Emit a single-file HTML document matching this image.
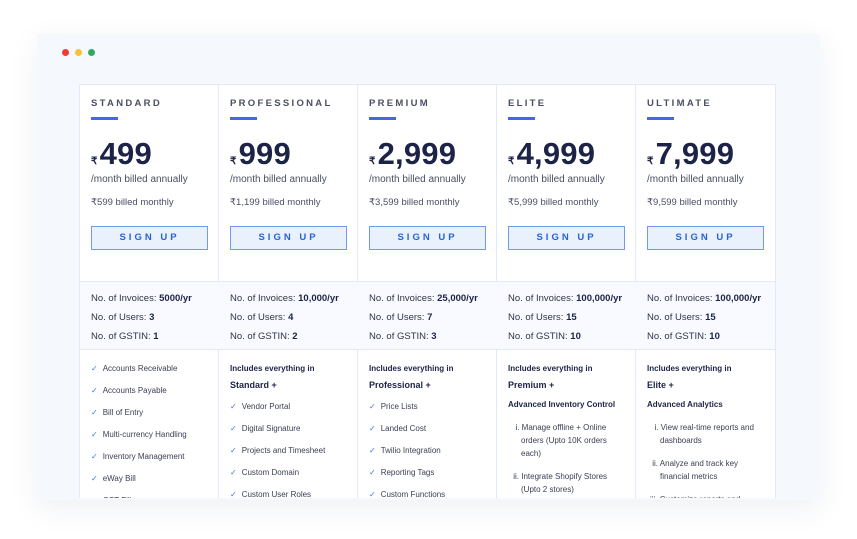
<!DOCTYPE html>
<html><head><meta charset="utf-8"><style>
*{margin:0;padding:0;box-sizing:border-box}
body{width:857px;height:539px;background:#fff;font-family:"Liberation Sans",sans-serif;position:relative;overflow:hidden}
.card{position:absolute;left:37px;top:34px;width:783px;height:466px;background:#f5f8fd;box-shadow:0 8px 30px rgba(40,60,120,0.08);border-radius:4px}
.dot{position:absolute;top:49px;width:7px;height:7px;border-radius:50%}
.tbl{position:absolute;left:79px;top:84px;width:697px;height:414px;overflow:hidden;background:#fff;border:1px solid #e1e9fb;border-bottom:none}
.col{position:absolute;top:0;width:139px;height:414px;border-right:1px solid #e1e9fb}
.col:last-child{border-right:none}
.t{position:absolute;left:11px;top:13px;font-size:9.5px;letter-spacing:2.3px;color:#4a4f63;font-weight:bold}
.bar{position:absolute;left:11px;top:32px;width:27px;height:3px;background:#4766e5}
.pr{position:absolute;left:11px;top:51px;font-size:31px;font-weight:bold;color:#1d2347;letter-spacing:0.2px}
.pr small{font-size:10px;font-weight:bold;margin-right:2px}
.m{position:absolute;left:11px;top:89px;font-size:10px;color:#4a4f63}
.b{position:absolute;left:11px;top:112px;font-size:9.5px;color:#4a4f63}
.btn{position:absolute;left:11px;top:141px;width:117px;height:24px;background:#e9f1fd;border:1px solid #6f9af0;color:#2563d8;font-size:9.5px;font-weight:bold;letter-spacing:3px;text-align:center;line-height:22px}
.st{position:absolute;left:0;top:196px;width:139px;height:69px;background:#f8faff;border-top:1px solid #e1e9fb;border-bottom:1px solid #e1e9fb;padding:7px 0 0 11px;font-size:9.5px;color:#2f3347;line-height:19px}
.st b{color:#1d2347}
.f{position:absolute;left:11px;top:276px;font-size:8px;color:#3a3f52;line-height:22px}
.f .c{color:#3b78e0;margin-right:5px;font-size:8px}
.h{font-size:8px;color:#1d2347;line-height:16px;font-weight:bold}
.h2{font-size:9px;color:#1d2347;line-height:16px;font-weight:bold;margin-bottom:3px}
.ol{font-size:8px;color:#3a3f52;line-height:13px;width:120px}
.ol div{padding-left:13px;text-indent:-10px;margin-bottom:10px}
</style></head><body>
<div class="card"></div>
<div class="dot" style="left:62px;background:#f13b36"></div>
<div class="dot" style="left:75px;background:#f8c13a"></div>
<div class="dot" style="left:88px;background:#2fab5f"></div>
<div class="tbl">
<div class="col" style="left:0">
<div class="t">STANDARD</div><div class="bar"></div>
<div class="pr"><small>₹</small>499</div><div class="m">/month billed annually</div><div class="b">₹599 billed monthly</div>
<div class="btn">SIGN UP</div>
<div class="st">No. of Invoices: <b>5000/yr</b><br>No. of Users: <b>3</b><br>No. of GSTIN: <b>1</b></div>
<div class="f" style="top:273px"><span class="c">✓</span>Accounts Receivable<br><span class="c">✓</span>Accounts Payable<br><span class="c">✓</span>Bill of Entry<br><span class="c">✓</span>Multi-currency Handling<br><span class="c">✓</span>Inventory Management<br><span class="c">✓</span>eWay Bill<br><span class="c">✓</span>GST Filing</div>
</div>
<div class="col" style="left:139px">
<div class="t">PROFESSIONAL</div><div class="bar"></div>
<div class="pr"><small>₹</small>999</div><div class="m">/month billed annually</div><div class="b">₹1,199 billed monthly</div>
<div class="btn">SIGN UP</div>
<div class="st">No. of Invoices: <b>10,000/yr</b><br>No. of Users: <b>4</b><br>No. of GSTIN: <b>2</b></div>
<div class="f"><div class="h">Includes everything in</div><div class="h2">Standard +</div><span class="c">✓</span>Vendor Portal<br><span class="c">✓</span>Digital Signature<br><span class="c">✓</span>Projects and Timesheet<br><span class="c">✓</span>Custom Domain<br><span class="c">✓</span>Custom User Roles</div>
</div>
<div class="col" style="left:278px">
<div class="t">PREMIUM</div><div class="bar"></div>
<div class="pr"><small>₹</small>2,999</div><div class="m">/month billed annually</div><div class="b">₹3,599 billed monthly</div>
<div class="btn">SIGN UP</div>
<div class="st">No. of Invoices: <b>25,000/yr</b><br>No. of Users: <b>7</b><br>No. of GSTIN: <b>3</b></div>
<div class="f"><div class="h">Includes everything in</div><div class="h2">Professional +</div><span class="c">✓</span>Price Lists<br><span class="c">✓</span>Landed Cost<br><span class="c">✓</span>Twilio Integration<br><span class="c">✓</span>Reporting Tags<br><span class="c">✓</span>Custom Functions</div>
</div>
<div class="col" style="left:417px">
<div class="t">ELITE</div><div class="bar"></div>
<div class="pr"><small>₹</small>4,999</div><div class="m">/month billed annually</div><div class="b">₹5,999 billed monthly</div>
<div class="btn">SIGN UP</div>
<div class="st">No. of Invoices: <b>100,000/yr</b><br>No. of Users: <b>15</b><br>No. of GSTIN: <b>10</b></div>
<div class="f"><div class="h">Includes everything in</div><div class="h2">Premium +</div><div class="h" style="margin-bottom:7px;line-height:18px">Advanced Inventory Control</div><div class="ol"><div>&nbsp;&nbsp;i. Manage offline + Online orders (Upto 10K orders each)</div><div>&nbsp;ii. Integrate Shopify Stores (Upto 2 stores)</div></div></div>
</div>
<div class="col" style="left:556px">
<div class="t">ULTIMATE</div><div class="bar"></div>
<div class="pr"><small>₹</small>7,999</div><div class="m">/month billed annually</div><div class="b">₹9,599 billed monthly</div>
<div class="btn">SIGN UP</div>
<div class="st">No. of Invoices: <b>100,000/yr</b><br>No. of Users: <b>15</b><br>No. of GSTIN: <b>10</b></div>
<div class="f"><div class="h">Includes everything in</div><div class="h2">Elite +</div><div class="h" style="margin-bottom:7px;line-height:18px">Advanced Analytics</div><div class="ol"><div>&nbsp;&nbsp;i. View real-time reports and dashboards</div><div>&nbsp;ii. Analyze and track key financial metrics</div><div>iii. Customize reports and</div></div></div>
</div>
</div>
</body></html>
